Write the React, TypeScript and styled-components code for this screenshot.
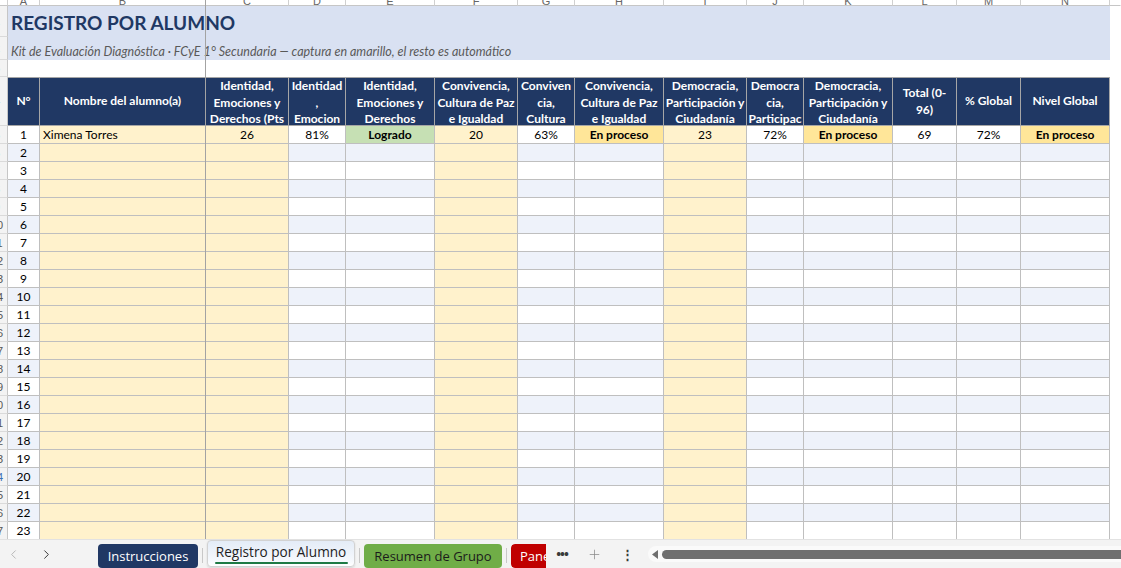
import React from "react";
import styled, { createGlobalStyle } from "styled-components";
import { ChevronLeft, ChevronRight, Plus } from "lucide-react";

const GRID =
  "8px 32px 166px 83px 57px 89px 83px 57px 89px 83px 57px 89px 64px 64px 89px 1fr";

type Kind = "num" | "name" | "input" | "calc";

interface Col {
  letter: string;
  head: string[];
  kind: Kind;
}

const COLS: Col[] = [
  { letter: "A", head: ["N°"], kind: "num" },
  { letter: "B", head: ["Nombre del alumno(a)"], kind: "name" },
  { letter: "C", head: ["Identidad,", "Emociones y", "Derechos (Pts"], kind: "input" },
  { letter: "D", head: ["Identidad", ",", "Emocion"], kind: "calc" },
  { letter: "E", head: ["Identidad,", "Emociones y", "Derechos"], kind: "calc" },
  { letter: "F", head: ["Convivencia,", "Cultura de Paz", "e Igualdad"], kind: "input" },
  { letter: "G", head: ["Conviven", "cia,", "Cultura"], kind: "calc" },
  { letter: "H", head: ["Convivencia,", "Cultura de Paz", "e Igualdad"], kind: "calc" },
  { letter: "I", head: ["Democracia,", "Participación y", "Ciudadanía"], kind: "input" },
  { letter: "J", head: ["Democra", "cia,", "Participac"], kind: "calc" },
  { letter: "K", head: ["Democracia,", "Participación y", "Ciudadanía"], kind: "calc" },
  { letter: "L", head: ["Total (0-", "96)"], kind: "calc" },
  { letter: "M", head: ["% Global"], kind: "calc" },
  { letter: "N", head: ["Nivel Global"], kind: "calc" },
];

type Level = "ok" | "mid" | undefined;

const FIRST: { v: string; level?: Level }[] = [
  { v: "1" },
  { v: "Ximena Torres" },
  { v: "26" },
  { v: "81%" },
  { v: "Logrado", level: "ok" },
  { v: "20" },
  { v: "63%" },
  { v: "En proceso", level: "mid" },
  { v: "23" },
  { v: "72%" },
  { v: "En proceso", level: "mid" },
  { v: "69" },
  { v: "72%" },
  { v: "En proceso", level: "mid" },
];

const Global = createGlobalStyle`
  html, body { margin: 0; padding: 0; background: #ffffff; }
  body { font-family: Lato, "Liberation Sans", sans-serif; overflow: hidden; }
  #root { height: 100vh; }
`;

const Page = styled.div`
  width: 100vw;
  height: 100vh;
  display: flex;
  flex-direction: column;
  overflow: hidden;
`;

const Sheet = styled.div`
  flex: 1;
  position: relative;
  overflow: hidden;
  display: flex;
  flex-direction: column;
`;

const Row = styled.div<{ $h: number }>`
  display: grid;
  grid-template-columns: ${GRID};
  height: ${(p) => p.$h}px;
  flex-shrink: 0;
`;

const Letter = styled.div<{ $edge?: boolean }>`
  box-sizing: border-box;
  border-right: 1px solid ${(p) => (p.$edge ? "transparent" : "#d0d0d0")};
  border-bottom: 1px solid #c6c6c6;
  display: flex;
  justify-content: center;
  align-items: flex-end;
  overflow: hidden;
  color: #666666;
  font: 11px/11px "Liberation Sans", sans-serif;
  span { margin-bottom: -2px; }
`;

const RowNum = styled.div<{ $blue?: boolean }>`
  box-sizing: border-box;
  background: #f3f3f3;
  border-right: 1px solid #c6c6c6;
  border-bottom: 1px solid #dadada;
  display: flex;
  justify-content: flex-end;
  align-items: center;
  overflow: hidden;
  color: ${(p) => (p.$blue ? "#3b6fb6" : "#555555")};
  font: 11px "Liberation Sans", sans-serif;
  span {
    flex-shrink: 0;
    width: 20px;
    text-align: center;
  }
`;

const TitleBlock = styled.div`
  grid-column: 2 / 16;
  background: #d9e1f2;
  display: grid;
  grid-template-rows: 31px 23px;
  padding-left: 3px;
`;

const TitleText = styled.h1`
  margin: 0;
  display: flex;
  align-items: center;
  padding-top: 2px;
  font: 700 19px Lato, "Liberation Sans", sans-serif;
  color: #1f3864;
`;

const SubText = styled.div`
  display: flex;
  align-items: flex-end;
  padding-bottom: 1px;
  font: italic 12.5px Lato, "Liberation Sans", sans-serif;
  color: #595959;
  white-space: nowrap;
`;

const Blank = styled.div``;

const LeftStack = styled.div`
  display: grid;
  grid-template-rows: 31px 23px;
`;

const HeadCell = styled.div`
  box-sizing: border-box;
  background: #203864;
  color: #ffffff;
  border-right: 1px solid #a6a6a6;
  border-bottom: 1px solid #a6a6a6;
  border-top: 1px solid #a6a6a6;
  display: flex;
  flex-direction: column;
  justify-content: safe center;
  align-items: center;
  overflow: hidden;
  font: 700 12px/16.5px Lato, "Liberation Sans", sans-serif;
  text-align: center;
  span { white-space: nowrap; }
`;

const Cell = styled.div<{ $bg: string; $align?: string; $bold?: boolean }>`
  box-sizing: border-box;
  background: ${(p) => p.$bg};
  border-right: 1px solid #bfbfbf;
  border-bottom: 1px solid #bfbfbf;
  display: flex;
  align-items: center;
  justify-content: ${(p) => p.$align || "center"};
  padding: 0 3px;
  overflow: hidden;
  white-space: nowrap;
  font: ${(p) => (p.$bold ? 700 : 400)} 12px Lato, "Liberation Sans", sans-serif;
  color: #000000;
`;

const FreezeLine = styled.div`
  position: absolute;
  left: 205px;
  top: 0;
  bottom: 0;
  width: 1px;
  background: #a3a3a3;
  pointer-events: none;
`;

/* ---- tab bar ---- */

const TabBar = styled.div`
  height: 29px;
  flex-shrink: 0;
  background: #f3f3f3;
  border-top: 1px solid #e2e2e2;
  box-sizing: border-box;
  display: flex;
  align-items: center;
  font-family: "Open Sans", "Noto Sans", sans-serif;
`;

const Nav = styled.div`
  width: 98px;
  display: flex;
  align-items: center;
  flex-shrink: 0;
`;

const NavBtn = styled.div<{ $off?: boolean }>`
  width: 26px;
  height: 24px;
  margin-right: 7px;
  display: flex;
  align-items: center;
  justify-content: center;
  color: ${(p) => (p.$off ? "#b8b8b8" : "#3a3a3a")};
`;

const Tabs = styled.div`
  display: flex;
  align-items: center;
  gap: 4px;
  height: 100%;
`;

const Tab = styled.div<{ $bg: string; $fg: string; $w: number; $start?: boolean }>`
  width: ${(p) => p.$w}px;
  height: 24px;
  margin-top: ${(p) => (p.$start ? 0 : 3)}px;
  box-sizing: border-box;
  border-radius: 4px;
  background: ${(p) => p.$bg};
  color: ${(p) => p.$fg};
  display: flex;
  align-items: center;
  justify-content: ${(p) => (p.$start ? "flex-start" : "center")};
  padding-left: ${(p) => (p.$start ? 9 : 0)}px;
  font-size: 13px;
  white-space: nowrap;
  overflow: hidden;
  flex-shrink: 0;
`;

const ActiveTab = styled.div`
  position: relative;
  width: 148px;
  height: 27px;
  margin-top: -2px;
  box-sizing: border-box;
  border: 1px solid #d2d2d2;
  border-radius: 4px;
  background: linear-gradient(#e4ecf7, #f6f9fd 80%, #ffffff);
  box-shadow: 0 1px 2px rgba(0, 0, 0, 0.12);
  color: #1e1e1e;
  display: flex;
  align-items: center;
  justify-content: center;
  padding-bottom: 3px;
  font-size: 13.6px;
  white-space: nowrap;
  flex-shrink: 0;
`;

const Underline = styled.div`
  position: absolute;
  left: 7px;
  right: 6px;
  bottom: 2px;
  height: 2px;
  border-radius: 1px;
  background: #1e7a45;
`;

const Sep = styled.div`
  width: 1px;
  height: 15px;
  margin-top: 3px;
  background: #c8c8c8;
  flex-shrink: 0;
`;

const Clip = styled.div`
  width: 35px;
  overflow: hidden;
  flex-shrink: 0;
  display: flex;
  border-radius: 4px 0 0 4px;
  margin-top: 3px;
  height: 24px;
`;

const Tools = styled.div`
  display: flex;
  align-items: center;
`;

const Tool = styled.div<{ $w: number }>`
  width: ${(p) => p.$w}px;
  display: flex;
  align-items: center;
  justify-content: center;
  color: #3a3a3a;
  font-size: 13px;
  font-weight: 700;
  letter-spacing: -1px;
`;

const Scroll = styled.div`
  flex: 1;
  height: 16px;
  margin-left: 4px;
  background: #fafafa;
  border-radius: 8px 0 0 8px;
  display: flex;
  align-items: center;
  padding-left: 4px;
  gap: 4px;
`;

const Thumb = styled.div`
  flex: 1;
  height: 9px;
  border-radius: 5px 0 0 5px;
  background: #6f6f6f;
`;

function App() {
  const rows = Array.from({ length: 23 }, (_, i) => i);
  return (
    <Page>
      <Global />
      <Sheet>
        <Row $h={6}>
          <Letter />
          {COLS.map((c) => (
            <Letter key={c.letter}>
              <span>{c.letter}</span>
            </Letter>
          ))}
          <Letter $edge />
        </Row>

        <Row $h={54}>
          <LeftStack>
            <RowNum>
              <span>1</span>
            </RowNum>
            <RowNum>
              <span>2</span>
            </RowNum>
          </LeftStack>
          <TitleBlock>
            <TitleText>REGISTRO POR ALUMNO</TitleText>
            <SubText>
              Kit de Evaluación Diagnóstica · FCyE 1° Secundaria — captura en amarillo, el resto es automático
            </SubText>
          </TitleBlock>
          <Blank />
        </Row>

        <Row $h={17}>
          <RowNum>
            <span>3</span>
          </RowNum>
        </Row>

        <Row $h={49}>
          <RowNum>
            <span>4</span>
          </RowNum>
          {COLS.map((c) => (
            <HeadCell key={c.letter}>
              {c.head.map((l, k) => (
                <span key={k}>{l}</span>
              ))}
            </HeadCell>
          ))}
          <Blank />
        </Row>

        {rows.map((i) => {
          const alt = i % 2 === 1;
          const base = alt ? "#eef2fa" : "#ffffff";
          return (
            <Row $h={18} key={i}>
              <RowNum $blue={i === 19}>
                <span>{i + 5}</span>
              </RowNum>
              {COLS.map((c, j) => {
                const yellow = c.kind === "input" || c.kind === "name";
                let bg = yellow ? "#fff2cc" : base;
                let text = "";
                let bold = false;
                if (c.kind === "num") text = String(i + 1);
                if (i === 0) {
                  const d = FIRST[j];
                  text = d.v;
                  if (d.level === "ok") bg = "#c6e0b4";
                  if (d.level === "mid") bg = "#ffe699";
                  bold = !!d.level;
                }
                return (
                  <Cell
                    key={c.letter}
                    $bg={bg}
                    $bold={bold}
                    $align={c.kind === "name" ? "flex-start" : "center"}
                  >
                    {text}
                  </Cell>
                );
              })}
              <Blank />
            </Row>
          );
        })}
        <FreezeLine />
      </Sheet>

      <TabBar>
        <Nav>
          <NavBtn $off>
            <ChevronLeft size={15} strokeWidth={1.6} />
          </NavBtn>
          <NavBtn>
            <ChevronRight size={15} strokeWidth={1.6} />
          </NavBtn>
        </Nav>
        <Tabs>
          <Tab $bg="#203864" $fg="#ffffff" $w={100}>
            Instrucciones
          </Tab>
          <Sep />
          <ActiveTab>
            Registro por Alumno
            <Underline />
          </ActiveTab>
          <Sep />
          <Tab $bg="#70ad47" $fg="#1b1b1b" $w={138}>
            Resumen de Grupo
          </Tab>
          <Sep />
          <Clip>
            <Tab $bg="#c00000" $fg="#ffffff" $w={80} $start>
              Panel
            </Tab>
          </Clip>
        </Tabs>
        <Tools>
          <Tool $w={32}>•••</Tool>
          <Tool $w={32}>
            <Plus size={15} strokeWidth={1.2} color="#8a8a8a" />
          </Tool>
          <Tool $w={34}>⋮</Tool>
        </Tools>
        <Scroll>
          <svg width="6" height="9" viewBox="0 0 6 9">
            <path d="M6 0 L0 4.5 L6 9 Z" fill="#6f6f6f" />
          </svg>
          <Thumb />
        </Scroll>
      </TabBar>
    </Page>
  );
}

export default App;
